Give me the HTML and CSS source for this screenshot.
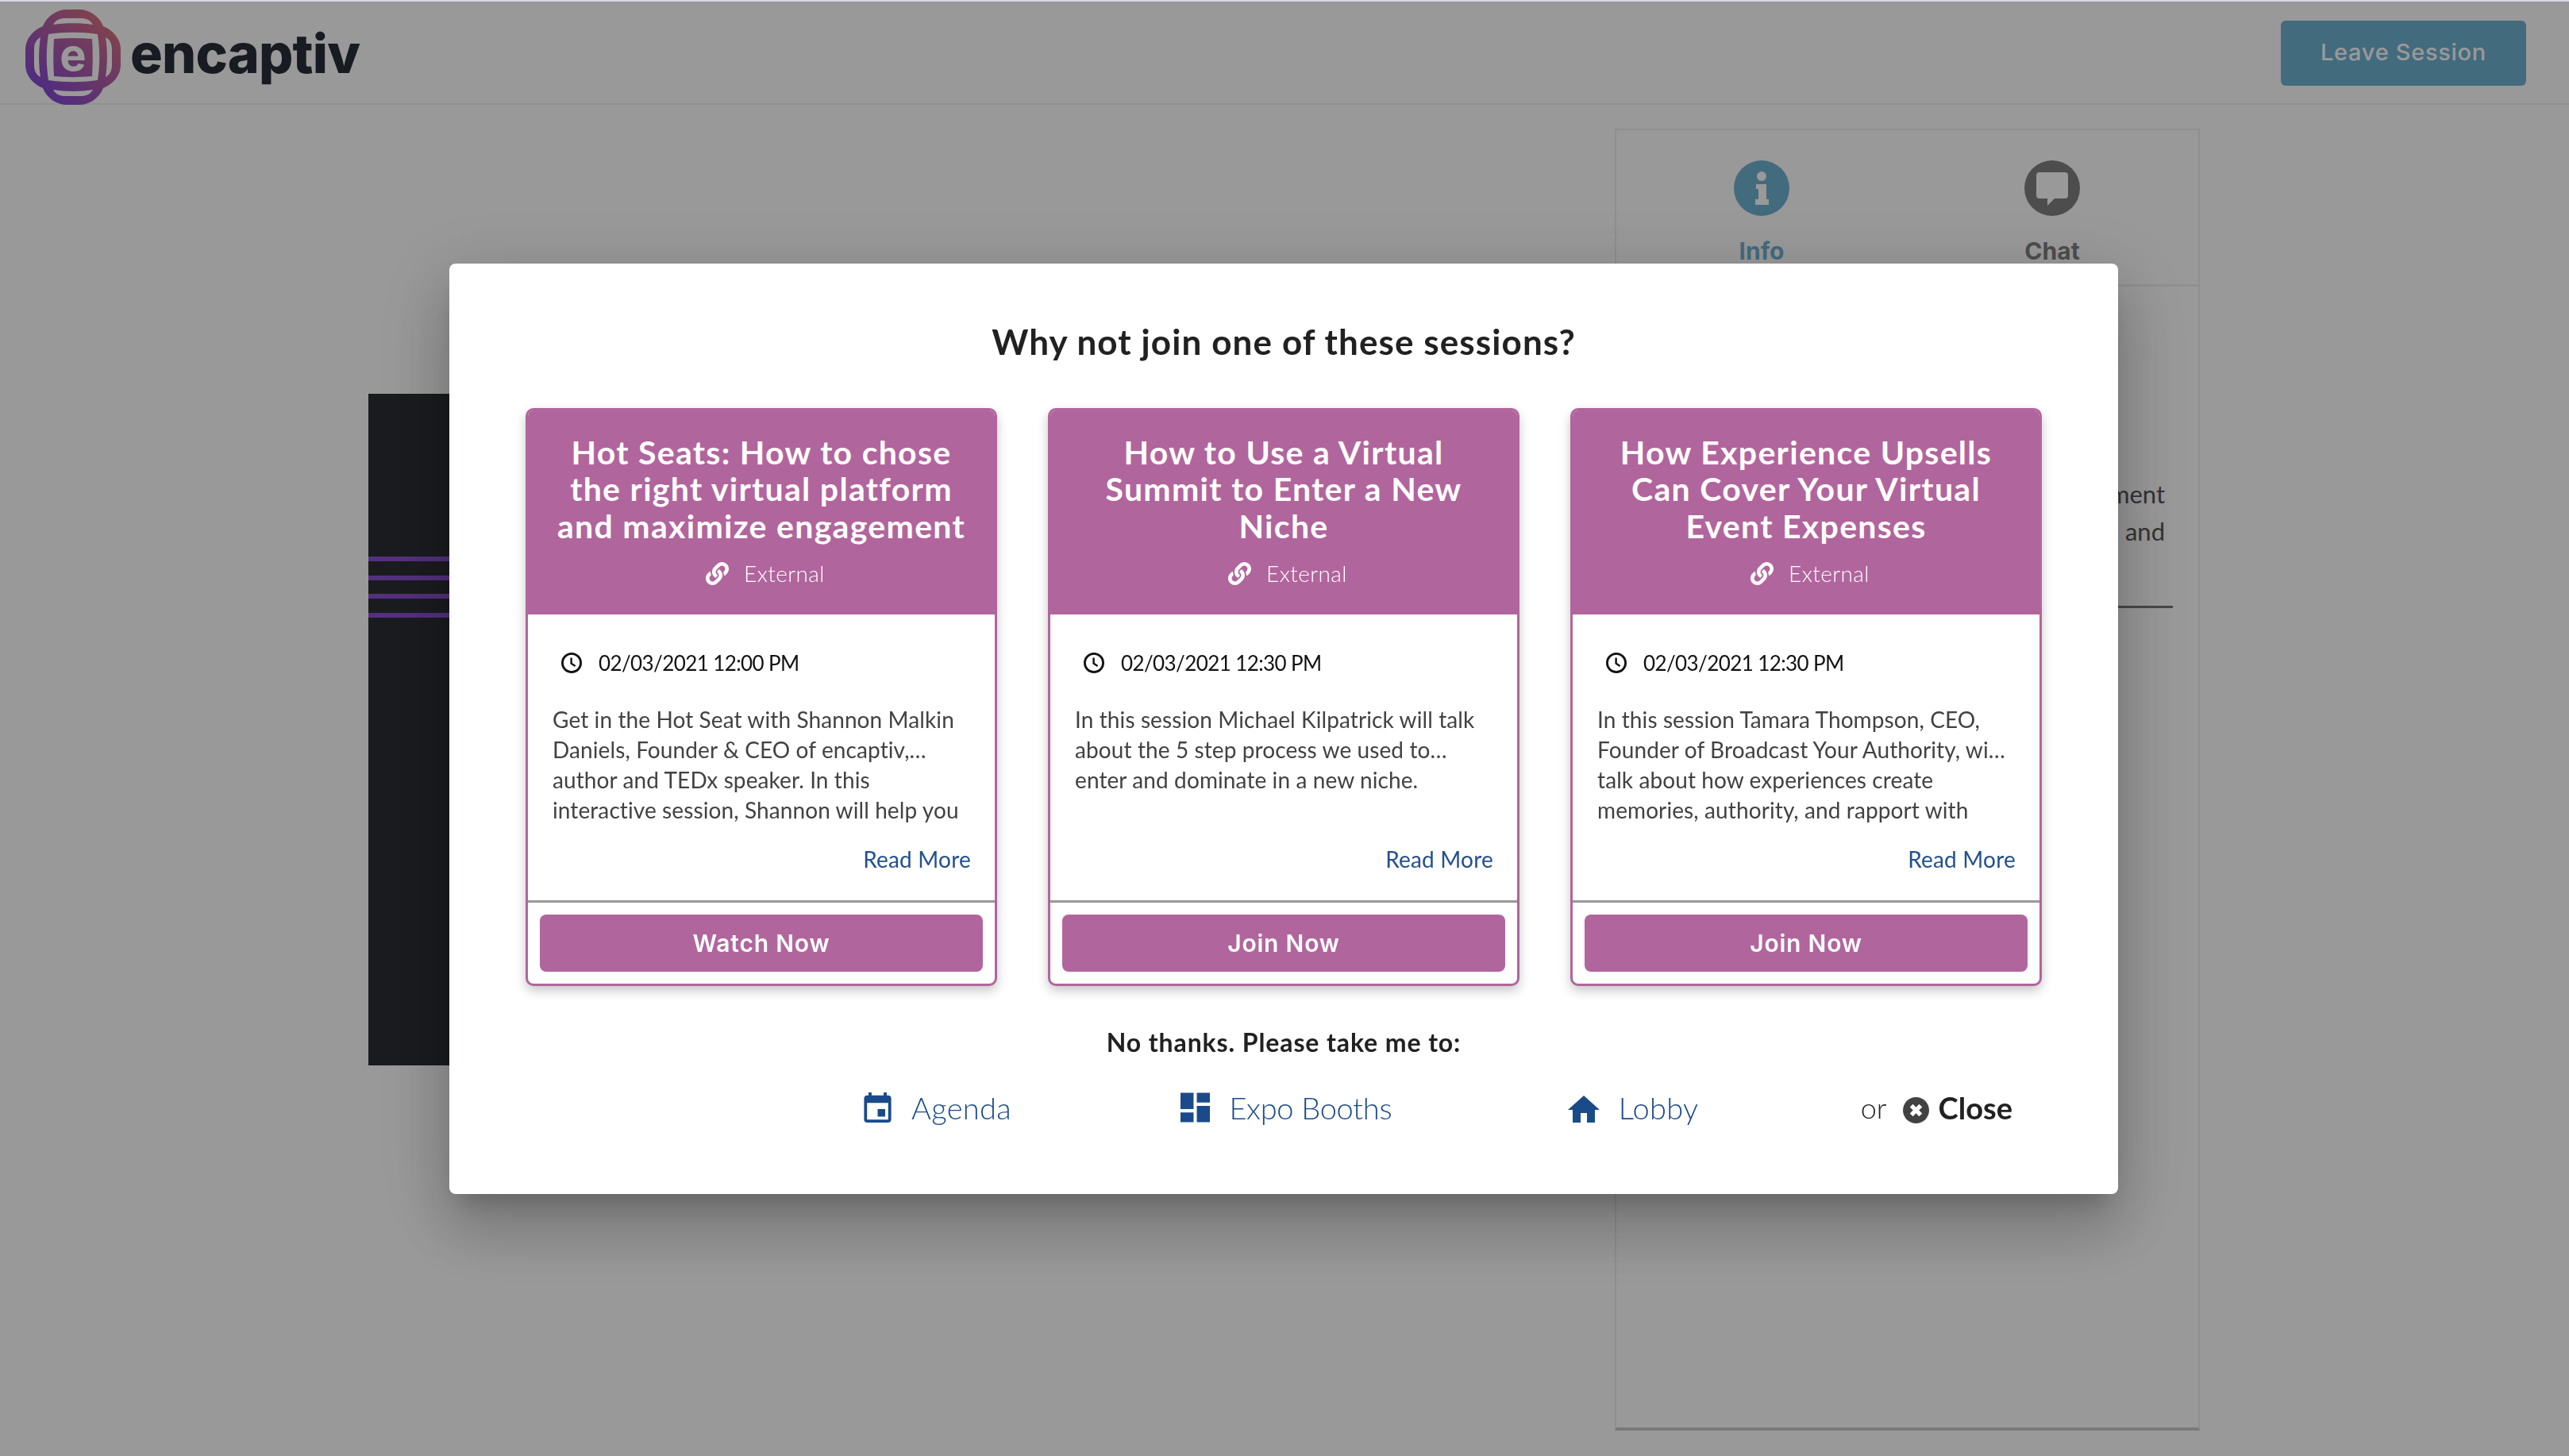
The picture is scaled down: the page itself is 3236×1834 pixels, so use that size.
FILE: index.html
```html
<!DOCTYPE html>
<html lang="en">
<head>
    <meta charset="UTF-8">
    <title>encaptiv</title>
    <link rel="stylesheet" href="styles.css">
</head>
<body>
    <svg class="defs" width="0" height="0">
        <defs>
            <symbol id="i-link" viewBox="0 0 512 512">
                <path fill="currentColor" d="M326.612 185.391c59.747 59.809 58.927 155.698.36 214.59-.11.12-.24.25-.36.37l-67.2 67.2c-59.27 59.27-155.699 59.262-214.96 0-59.27-59.26-59.27-155.7 0-214.96l37.106-37.106c9.84-9.84 26.786-3.3 27.294 10.606.648 17.722 3.826 35.527 9.69 52.721 1.986 5.822.567 12.262-3.783 16.612l-13.087 13.087c-28.026 28.026-28.905 73.66-1.155 101.96 28.024 28.579 74.086 28.749 102.325.51l67.2-67.19c28.191-28.191 28.073-73.757 0-101.83-3.701-3.694-7.429-6.564-10.341-8.569a16.037 16.037 0 0 1-6.947-12.606c-.396-10.567 3.348-21.456 11.698-29.806l21.054-21.055c5.521-5.521 14.182-6.199 20.584-1.731a152.482 152.482 0 0 1 20.522 17.197zM467.547 44.449c-59.261-59.262-155.69-59.27-214.96 0l-67.2 67.2c-.12.12-.25.25-.36.37-58.566 58.892-59.387 154.781.36 214.59a152.454 152.454 0 0 0 20.521 17.196c6.402 4.468 15.064 3.789 20.584-1.731l21.054-21.055c8.35-8.35 12.094-19.239 11.698-29.806a16.037 16.037 0 0 0-6.947-12.606c-2.912-2.005-6.64-4.875-10.341-8.569-28.073-28.073-28.191-73.639 0-101.83l67.2-67.19c28.239-28.239 74.3-28.069 102.325.51 27.75 28.3 26.872 73.934-1.155 101.96l-13.087 13.087c-4.35 4.35-5.769 10.79-3.783 16.612 5.864 17.194 9.042 34.999 9.69 52.721.509 13.906 17.454 20.446 27.294 10.606l37.106-37.106c59.271-59.259 59.271-155.699.001-214.959z"/>
            </symbol>
            <symbol id="i-clock" viewBox="0 0 28 28">
                <circle cx="14" cy="14" r="11.6" fill="none" stroke="currentColor" stroke-width="2.8"/>
                <path d="M13.6 7.5v7.2l5 3.2" fill="none" stroke="currentColor" stroke-width="2.4"/>
            </symbol>
        </defs>
    </svg>

    <div class="page">
        <header class="topbar">
            <div class="brand">
                <svg class="brand-mark" viewBox="0 0 120 120">
                    <defs>
                        <linearGradient id="logoGrad" x1="0.1" y1="0.95" x2="0.9" y2="0.05">
                            <stop offset="0" stop-color="#7c45e0"/>
                            <stop offset="1" stop-color="#de7378"/>
                        </linearGradient>
                        <path id="crescent" d="M35 19C38 13 44 11 50 11H70C76 11 82 13 85 19C70 16.5 50 16.5 35 19Z" fill="#fff"/>
                    </defs>
                    <path fill="url(#logoGrad)" d="M22 21C27 8 40 0 52 0H68C80 0 93 8 98 21C111 26 120 38 120 50V70C120 82 111 94 98 99C93 112 80 120 68 120H52C40 120 27 112 22 99C9 94 0 82 0 70V50C0 38 9 26 22 21Z"/>
                    <use href="#crescent"/>
                    <use href="#crescent" transform="rotate(90 60 60)"/>
                    <use href="#crescent" transform="rotate(180 60 60)"/>
                    <use href="#crescent" transform="rotate(270 60 60)"/>
                    <path fill="#fff" fill-rule="evenodd" d="M29 31C50 28 70 28 91 31C94 50 94 70 91 89C70 92 50 92 29 89C26 70 26 50 29 31ZM36 37C35 52 35 68 36 84C52 85.500 68 85.500 84 84C85 68 85 52 84 37C68 35.500 52 35.500 36 37Z"/>
                    <text class="brand-e" x="60" y="77" text-anchor="middle">e</text>
                </svg>
                <span class="brand-name">encaptiv</span>
            </div>
            <button class="leave-btn">Leave Session</button>
        </header>

        <main class="stage">
            <div class="video">
                <div class="video-lines">
                    <span></span><span></span><span></span><span></span>
                </div>
            </div>
            <aside class="side">
                <div class="tabs">
                    <div class="tab tab-active">
                        <svg class="tab-icon" viewBox="0 0 70 70">
                            <circle cx="35" cy="35" r="35" fill="currentColor"/>
                            <circle cx="35" cy="20" r="6" fill="#fff"/>
                            <path fill="#fff" d="M28 30H41V49H44V56H27V49H31V36H28Z"/>
                        </svg>
                        <span>Info</span>
                    </div>
                    <div class="tab">
                        <svg class="tab-icon" viewBox="0 0 70 70">
                            <circle cx="35" cy="35" r="35" fill="currentColor"/>
                            <path fill="#fff" d="M19 15H51Q55 15 55 19V44Q55 48 51 48H38L29 57V48H19Q15 48 15 44V19Q15 15 19 15Z"/>
                        </svg>
                        <span>Chat</span>
                    </div>
                </div>
                <div class="side-text">
                    <p>engagement</p>
                    <p>and</p>
                </div>
                <div class="side-rule"></div>
            </aside>
        </main>
    </div>

    <div class="overlay">
        <section class="modal">
            <h2 class="modal-title">Why not join one of these sessions?</h2>

            <div class="cards">
                <article class="card">
                    <div class="card-head">
                        <h3>Hot Seats: How to chose the right virtual platform and maximize engagement</h3>
                        <div class="card-type"><svg class="link-icon"><use href="#i-link"/></svg>External</div>
                    </div>
                    <div class="card-body">
                        <div class="card-date"><svg class="clock-icon"><use href="#i-clock"/></svg>02/03/2021 12:00 PM</div>
                        <div class="card-desc">
                            <p>Get in the Hot Seat with Shannon Malkin</p>
                            <p>Daniels, Founder &amp; CEO of encaptiv,…</p>
                            <p>author and TEDx speaker. In this</p>
                            <p>interactive session, Shannon will help you</p>
                        </div>
                        <a class="read-more">Read More</a>
                    </div>
                    <div class="card-foot"><button class="card-btn">Watch Now</button></div>
                </article>

                <article class="card">
                    <div class="card-head">
                        <h3>How to Use a Virtual Summit to Enter a New Niche</h3>
                        <div class="card-type"><svg class="link-icon"><use href="#i-link"/></svg>External</div>
                    </div>
                    <div class="card-body">
                        <div class="card-date"><svg class="clock-icon"><use href="#i-clock"/></svg>02/03/2021 12:30 PM</div>
                        <div class="card-desc">
                            <p>In this session Michael Kilpatrick will talk</p>
                            <p>about the 5 step process we used to…</p>
                            <p>enter and dominate in a new niche.</p>
                            <p>&nbsp;</p>
                        </div>
                        <a class="read-more">Read More</a>
                    </div>
                    <div class="card-foot"><button class="card-btn">Join Now</button></div>
                </article>

                <article class="card">
                    <div class="card-head">
                        <h3>How Experience Upsells Can Cover Your Virtual Event Expenses</h3>
                        <div class="card-type"><svg class="link-icon"><use href="#i-link"/></svg>External</div>
                    </div>
                    <div class="card-body">
                        <div class="card-date"><svg class="clock-icon"><use href="#i-clock"/></svg>02/03/2021 12:30 PM</div>
                        <div class="card-desc">
                            <p>In this session Tamara Thompson, CEO,</p>
                            <p>Founder of Broadcast Your Authority, wi…</p>
                            <p>talk about how experiences create</p>
                            <p>memories, authority, and rapport with</p>
                        </div>
                        <a class="read-more">Read More</a>
                    </div>
                    <div class="card-foot"><button class="card-btn">Join Now</button></div>
                </article>
            </div>

            <p class="no-thanks">No thanks. Please take me to:</p>

            <nav class="links">
                <a class="go-link">
                    <svg class="go-icon" viewBox="3 1 18 20"><path fill="currentColor" d="M17 12h-5v5h5v-5zM16 1v2H8V1H6v2H5c-1.11 0-1.99.9-1.99 2L3 19c0 1.100.89 2 2 2h14c1.100 0 2-.9 2-2V5c0-1.100-.9-2-2-2h-1V1h-2zm3 18H5V8h14v11z"/></svg>
                    Agenda
                </a>
                <a class="go-link go-link-expo">
                    <svg class="go-icon" viewBox="3 3 18 18"><path fill="currentColor" d="M3 13h8V3H3v10zm0 8h8v-6H3v6zm10 0h8V11h-8v10zm0-18v6h8V3h-8z"/></svg>
                    Expo Booths
                </a>
                <a class="go-link go-link-lobby">
                    <svg class="go-icon go-icon-home" viewBox="2 3 20 17"><path fill="currentColor" d="M10 20v-6h4v6h5v-8h3L12 3 2 12h3v8z"/></svg>
                    Lobby
                </a>
                <div class="close-wrap">
                    <span class="or">or</span>
                    <svg class="close-icon" viewBox="0 0 34 34">
                        <circle cx="17" cy="17" r="17" fill="#424242"/>
                        <path d="M11 11L23 23M23 11L11 23" stroke="#fff" stroke-width="5.500"/>
                    </svg>
                    <a class="close-link">Close</a>
                </div>
            </nav>
        </section>
    </div>
</body>
</html>
```

FILE: styles.css
```css
* {
    box-sizing: border-box;
}
html, body {
    margin: 0;
    padding: 0;
    height: 100%;
}
body {
    font-family: Lato, "Open Sans", Arial, sans-serif;
    background: #fff;
    overflow: hidden;
}
p, h2, h3 {
    margin: 0;
}
.defs {
    position: absolute;
}

/* page behind the dialog */
.page {
    height: 1834px;
    padding-top: 2px;
}
.topbar {
    height: 130px;
    display: flex;
    justify-content: space-between;
    align-items: flex-start;
    padding: 10px 54px 0 32px;
    border-bottom: 2px solid #f0f0f0;
}
.brand {
    display: flex;
    align-items: center;
    gap: 12px;
}
.brand-mark {
    width: 120px;
    height: 120px;
}
.brand-e {
    font-family: Inter, sans-serif;
    font-weight: 700;
    font-size: 56px;
    fill: #fff;
}
.brand-name {
    font-family: Inter, sans-serif;
    font-weight: 800;
    font-size: 68px;
    letter-spacing: -0.8px;
    color: #282d38;
    line-height: 1;
    padding-bottom: 10px;
}
.leave-btn {
    width: 309px;
    height: 82px;
    margin-top: 14px;
    border: none;
    border-radius: 6px;
    background: #70b2d2;
    color: #fff;
    font-family: Inter, sans-serif;
    font-weight: 500;
    font-size: 29px;
    letter-spacing: 0.7px;
    padding-bottom: 4px;
}
.stage {
    display: flex;
    padding: 30px 0 0 464px;
}
.video {
    width: 1500px;
    height: 846px;
    margin-top: 334px;
    background: #2c2e34;
    padding-top: 205px;
}
.video-lines {
    display: flex;
    flex-direction: column;
    gap: 17.500px;
}
.video-lines span {
    display: block;
    height: 6px;
    background: #8c50d4;
}
.side {
    width: 737px;
    height: 1640px;
    margin-left: 70px;
    border: 2px solid #eee;
    border-bottom-width: 4px;
    border-bottom-color: #ccc;
}
.tabs {
    height: 197px;
    display: flex;
    border-bottom: 3px solid #f0f0f0;
}
.tab {
    width: 366px;
    padding-top: 38px;
    display: flex;
    flex-direction: column;
    align-items: center;
    gap: 26px;
    color: #808080;
    font-family: Inter, sans-serif;
    font-weight: 700;
    font-size: 30px;
    line-height: 36px;
}
.tab-active {
    color: #70b2d2;
}
.tab-icon {
    width: 70px;
    height: 70px;
}
.side-text {
    margin-top: 238px;
    padding-right: 42px;
    text-align: right;
    font-size: 31px;
    line-height: 47px;
    color: #555;
}
.side-rule {
    margin: 70px 32px 0 0;
    height: 3px;
    background: #777;
}

/* dialog */
.overlay {
    position: fixed;
    inset: 0;
    display: flex;
    align-items: center;
    justify-content: center;
    padding-right: 2px;
    border-top: 2px solid #d8d6e6;
    background: rgba(0, 0, 0, 0.4);
}
.modal {
    width: 2102px;
    height: 1172px;
    padding: 0 96px;
    background: #fff;
    border-radius: 8px;
    box-shadow: 0 22px 30px -14px rgba(0, 0, 0, 0.2), 0 48px 76px 6px rgba(0, 0, 0, 0.14), 0 18px 92px 16px rgba(0, 0, 0, 0.12);
}
.modal-title {
    padding-top: 69px;
    height: 182px;
    text-align: center;
    font-size: 44px;
    line-height: 58px;
    font-weight: 700;
    letter-spacing: 1.1px;
    color: #212121;
}
.cards {
    display: flex;
    justify-content: space-between;
}
.card {
    width: 594px;
    height: 728px;
    display: flex;
    flex-direction: column;
    border: 3px solid #b1659d;
    border-radius: 10px;
    background: #fff;
    box-shadow: 0 6px 14px rgba(0, 0, 0, 0.22);
    overflow: hidden;
}
.card-head {
    height: 257px;
    padding: 30px 30px 0;
    background: #b1659d;
    color: #fff;
    text-align: center;
}
.card-head h3 {
    height: 139px;
    font-size: 41px;
    line-height: 46.300px;
    font-weight: 700;
    letter-spacing: 1.3px;
}
.card-type {
    margin-top: 16px;
    padding-left: 10px;
    display: flex;
    justify-content: center;
    align-items: center;
    gap: 19px;
    font-size: 28px;
    line-height: 40px;
    font-weight: 300;
    letter-spacing: 0.4px;
}
.link-icon {
    width: 29px;
    height: 29px;
    flex: none;
}
.card-body {
    height: 360px;
    padding: 43px 30px 0 31px;
    display: flex;
    flex-direction: column;
}
.card-date {
    display: flex;
    align-items: center;
    gap: 20px;
    padding-left: 10px;
    font-size: 26px;
    letter-spacing: -0.6px;
    line-height: 36px;
    color: #111;
}
.clock-icon {
    width: 28px;
    height: 28px;
    flex: none;
}
.card-desc {
    margin-top: 34px;
    font-size: 28px;
    line-height: 38px;
    letter-spacing: 0.1px;
    color: #424242;
}
.card-desc p {
    white-space: nowrap;
}
.read-more {
    margin-top: 24px;
    align-self: flex-end;
    font-size: 28px;
    line-height: 38px;
    letter-spacing: 0.2px;
    color: #22508f;
}
.card-foot {
    border-top: 3px solid #999;
    padding: 15px 15px 0;
    flex: 1;
}
.card-btn {
    display: block;
    width: 100%;
    height: 72px;
    border: none;
    border-radius: 8px;
    background: #b1659d;
    color: #fff;
    font-family: Inter, sans-serif;
    font-weight: 600;
    font-size: 30px;
    letter-spacing: 0.8px;
}
.no-thanks {
    margin-top: 51px;
    text-align: center;
    font-size: 32px;
    line-height: 40px;
    font-weight: 700;
    letter-spacing: 0.9px;
    color: #212121;
}
.links {
    margin-top: 38px;
    padding: 0 37px 0 425px;
    display: flex;
    justify-content: space-between;
    align-items: center;
}
.go-link {
    display: flex;
    align-items: center;
    gap: 24px;
    font-size: 38px;
    line-height: 48px;
    font-weight: 300;
    letter-spacing: 0.3px;
    color: #1b4a8a;
}
.go-link-expo {
    margin-left: 9px;
    letter-spacing: -0.3px;
}
.go-link-lobby {
    margin-left: 17px;
}
.go-icon {
    width: 37px;
    height: 38px;
    flex: none;
}
.go-icon-home {
    width: 40px;
    height: 34px;
    margin-top: 4px;
}
.close-wrap {
    display: flex;
    align-items: center;
    font-size: 38px;
    line-height: 48px;
    color: #212121;
}
.or {
    font-size: 36px;
    font-weight: 300;
}
.close-icon {
    width: 33px;
    height: 33px;
    margin: 6px 12px 0 20px;
}
.close-link {
    font-weight: 700;
}
```
